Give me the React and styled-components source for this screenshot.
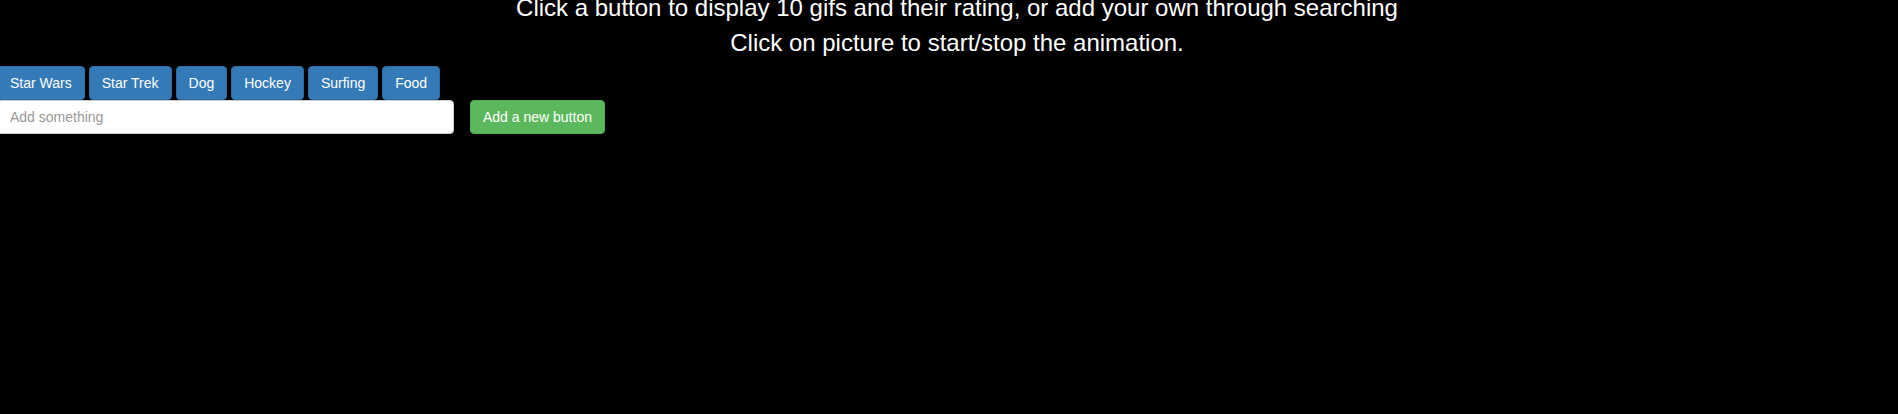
import React from "react";
import styled, { createGlobalStyle } from "styled-components";

const Global = createGlobalStyle`
  html, body {
    margin: 0;
    padding: 0;
    background: #000;
    font-family: "Liberation Sans", Arial, sans-serif;
    overflow: hidden;
  }
  * { box-sizing: border-box; }
`;

const Page = styled.div`
  width: 1898px;
  height: 414px;
  background: #000;
  display: flex;
  flex-direction: column;
`;

const Intro = styled.div`
  margin-top: -10px;
  padding-left: 16px;
  text-align: center;
  color: #fff;
  font-size: 24px;
  line-height: 35px;
`;

const IntroLine = styled.div`
  white-space: nowrap;
`;

const Controls = styled.div`
  margin-top: 6px;
  margin-left: -3px;
  display: flex;
  flex-direction: column;
`;

const ButtonRow = styled.div`
  display: flex;
  gap: 4px;
`;

const TopicButton = styled.button`
  font-family: "Liberation Sans", Arial, sans-serif;
  font-size: 14px;
  line-height: 20px;
  padding: 6px 12px;
  color: #fff;
  background: #337ab7;
  border: 1px solid #2e6da4;
  border-radius: 4px;
  cursor: pointer;
  white-space: nowrap;
`;

const SearchRow = styled.form`
  display: flex;
  gap: 16px;
  align-items: center;
`;

const SearchInput = styled.input`
  width: 457px;
  height: 34px;
  padding: 6px 12px;
  font-family: "Liberation Sans", Arial, sans-serif;
  font-size: 14px;
  line-height: 20px;
  color: #555;
  background: #fff;
  border: 1px solid #ccc;
  border-radius: 4px;
  outline: none;
  &::placeholder { color: #999; }
`;

const AddButton = styled.button`
  font-family: "Liberation Sans", Arial, sans-serif;
  font-size: 14px;
  line-height: 20px;
  padding: 6px 12px;
  color: #fff;
  background: #5cb85c;
  border: 1px solid #4cae4c;
  border-radius: 4px;
  cursor: pointer;
  white-space: nowrap;
`;

const topics = ["Star Wars", "Star Trek", "Dog", "Hockey", "Surfing", "Food"];

export default function App() {
  return (
    <>
      <Global />
      <Page>
        <Intro>
          <IntroLine>Click a button to display 10 gifs and their rating, or add your own through searching</IntroLine>
          <IntroLine>Click on picture to start/stop the animation.</IntroLine>
        </Intro>
        <Controls>
          <ButtonRow>
            {topics.map((t) => (
              <TopicButton key={t} type="button">{t}</TopicButton>
            ))}
          </ButtonRow>
          <SearchRow onSubmit={(e) => e.preventDefault()}>
            <SearchInput type="text" placeholder="Add something" />
            <AddButton type="submit">Add a new button</AddButton>
          </SearchRow>
        </Controls>
      </Page>
    </>
  );
}
